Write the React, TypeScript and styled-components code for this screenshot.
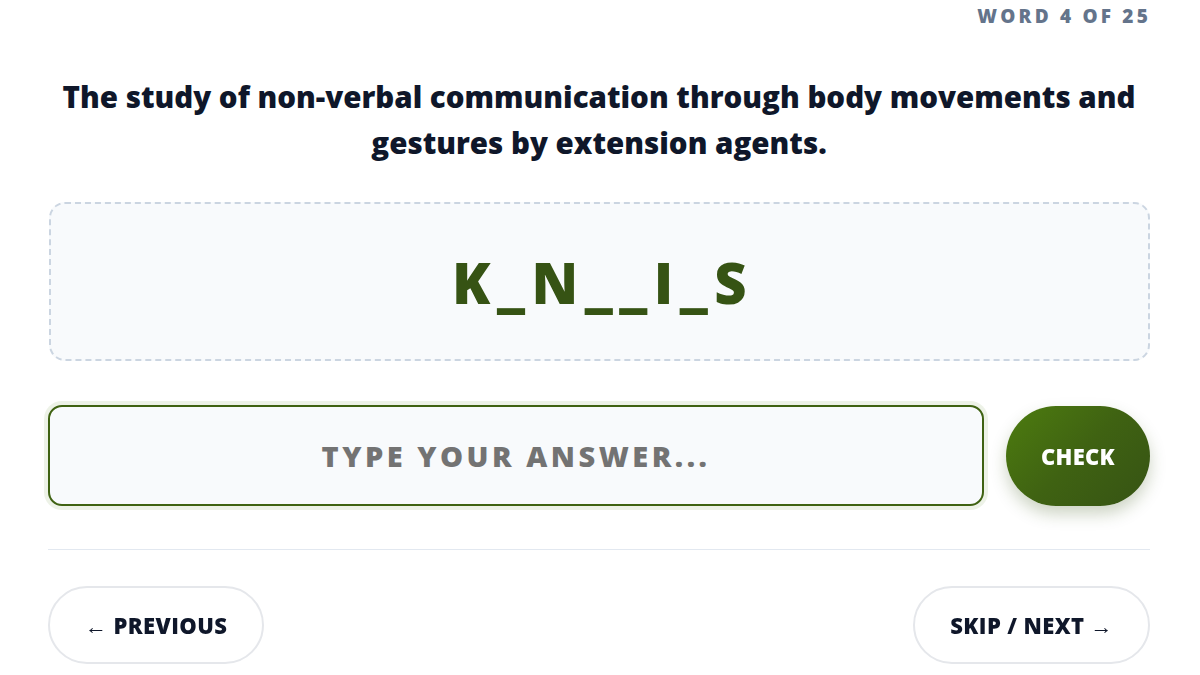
import React, { useState } from "react";
import styled, { createGlobalStyle } from "styled-components";

const GlobalStyle = createGlobalStyle`
  html, body {
    margin: 0;
    padding: 0;
    background: #ffffff;
    font-family: "Open Sans", "Noto Sans", "Liberation Sans", sans-serif;
    overflow: hidden;
  }
`;

export default function App() {
  const [answer, setAnswer] = useState("");

  return (
    <Page>
      <GlobalStyle />
      <Counter>WORD 4 OF 25</Counter>
      <Question>
        The study of non-verbal communication through body movements and
        gestures by extension agents.
      </Question>
      <HintBox>
        <Hint>K_N__I_S</Hint>
      </HintBox>
      <AnswerRow>
        <AnswerInput
          autoFocus
          placeholder="TYPE YOUR ANSWER..."
          value={answer}
          onChange={(e) => setAnswer(e.target.value)}
        />
        <CheckButton>CHECK</CheckButton>
      </AnswerRow>
      <Divider />
      <NavRow>
        <NavButton>← PREVIOUS</NavButton>
        <NavButton>SKIP / NEXT →</NavButton>
      </NavRow>
    </Page>
  );
}

const Page = styled.div`
  display: flex;
  flex-direction: column;
  padding: 3px 50px 0 48px;
  box-sizing: border-box;
  width: 1200px;
`;

const Counter = styled.div`
  align-self: flex-end;
  font-size: 19px;
  font-weight: 800;
  letter-spacing: 3.2px;
  color: #64748b;
  margin-right: -1px;
`;

const Question = styled.h1`
  margin: 45px 0 0;
  text-align: center;
  font-size: 29.5px;
  line-height: 46px;
  font-weight: 800;
  color: #0f172a;
`;

const HintBox = styled.div`
  margin-top: 36px;
  margin-left: 1px;
  height: 159px;
  box-sizing: border-box;
  display: flex;
  align-items: center;
  justify-content: center;
  background: #f8fafc;
  border: 2px dashed #cbd5e1;
  border-radius: 16px;
`;

const Hint = styled.div`
  font-size: 56px;
  font-weight: 800;
  letter-spacing: 6.5px;
  color: #365314;
  padding-left: 6px;
`;

const AnswerRow = styled.div`
  display: flex;
  align-items: center;
  gap: 22px;
  margin-top: 44px;
`;

const AnswerInput = styled.input`
  flex: 1;
  height: 101px;
  box-sizing: border-box;
  border: 2px solid #3f6212;
  border-radius: 14px;
  background: #f8fafc;
  box-shadow: 0 0 0 4px rgba(77, 124, 15, 0.1);
  text-align: center;
  font-family: "Open Sans", "Noto Sans", sans-serif;
  font-size: 29px;
  font-weight: 800;
  letter-spacing: 3.5px;
  color: #1f2937;
  caret-color: #111827;
  outline: none;

  &::placeholder {
    color: #737373;
  }
`;

const CheckButton = styled.button`
  width: 144px;
  height: 100px;
  border: none;
  border-radius: 50px;
  background: linear-gradient(135deg, #4d7c0f 0%, #3f6212 50%, #365314 100%);
  box-shadow: 0 8px 16px rgba(54, 83, 20, 0.25);
  color: #ffffff;
  font-family: "Open Sans", "Noto Sans", sans-serif;
  font-size: 22px;
  font-weight: 800;
  letter-spacing: 0.3px;
  cursor: pointer;
`;

const Divider = styled.hr`
  margin: 43px 0 0;
  border: none;
  border-top: 1px solid #e2e8f0;
`;

const NavRow = styled.div`
  display: flex;
  justify-content: space-between;
  margin-top: 36px;
`;

const NavButton = styled.button`
  height: 78px;
  padding: 0 35px;
  background: #ffffff;
  border: 2px solid #e5e7eb;
  border-radius: 39px;
  color: #0f172a;
  font-family: "Open Sans", "Noto Sans", sans-serif;
  font-size: 22px;
  font-weight: 800;
  letter-spacing: 0.4px;
  cursor: pointer;
`;
